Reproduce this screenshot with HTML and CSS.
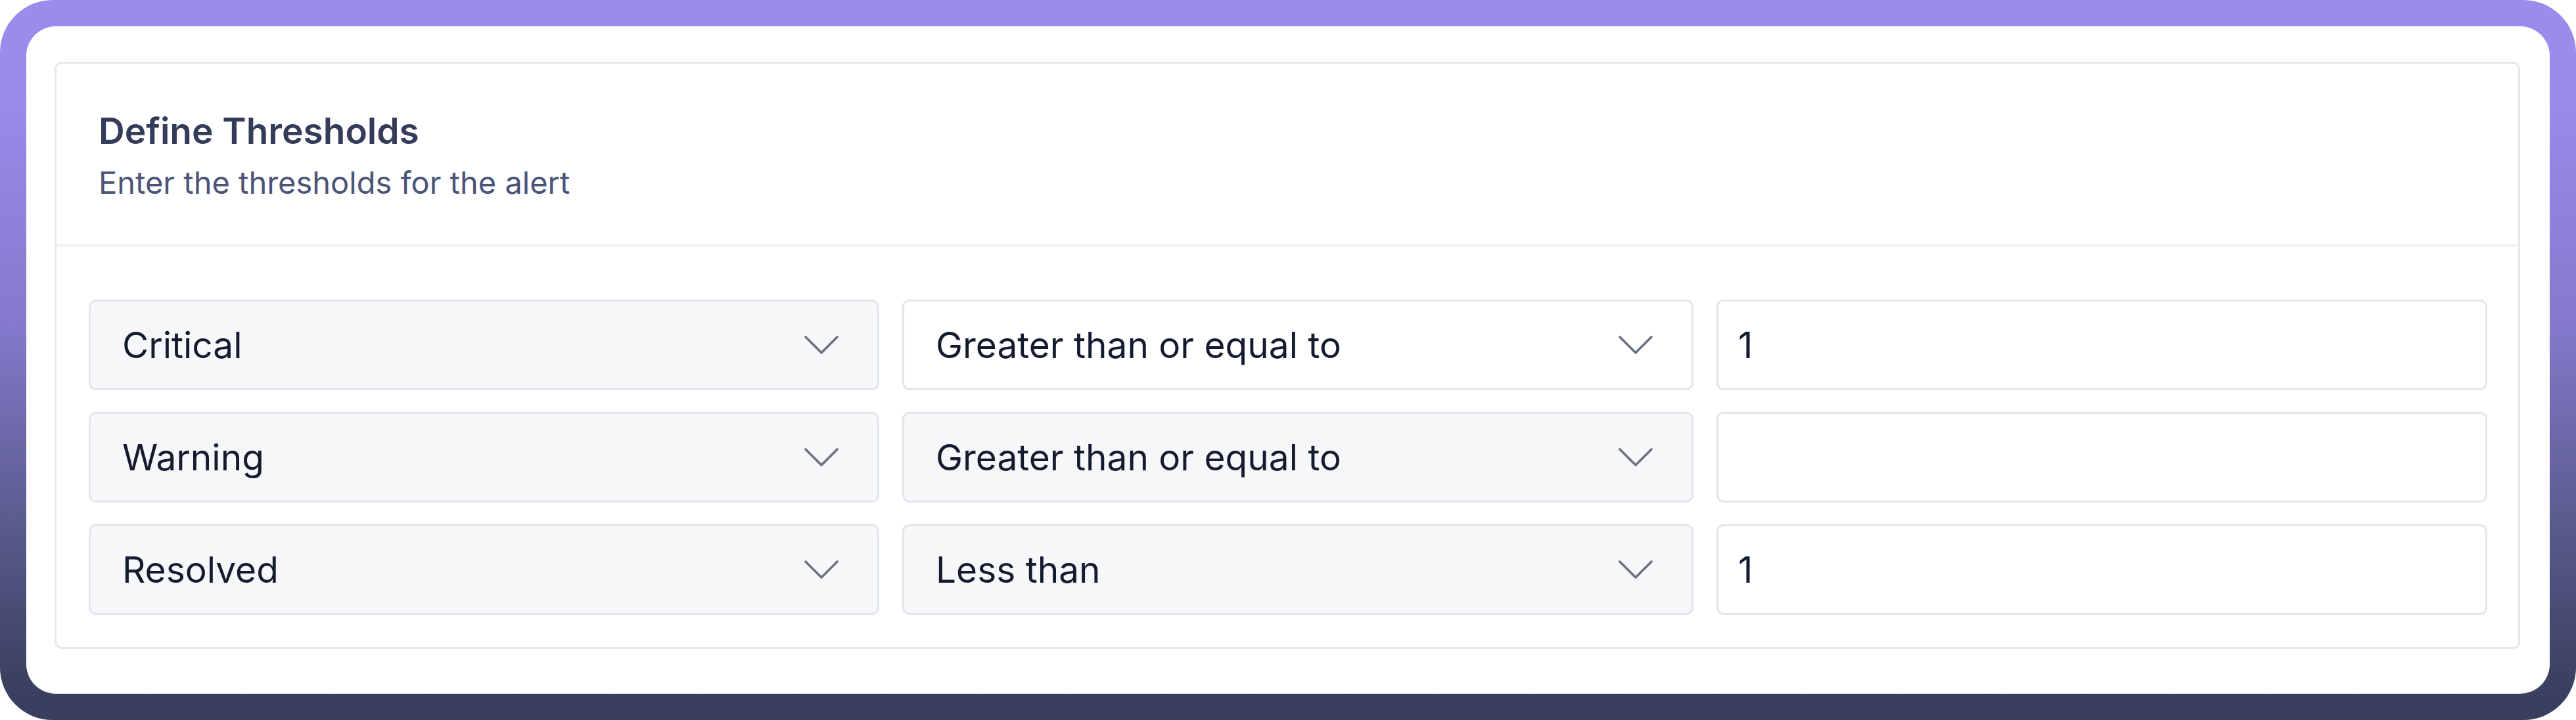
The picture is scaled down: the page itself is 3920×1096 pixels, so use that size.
FILE: index.html
```html
<!DOCTYPE html>
<html lang="en">
<head>
<meta charset="utf-8">
<title>Define Thresholds</title>
<link rel="stylesheet" href="styles.css">
</head>
<body>
<div class="frame">
  <div class="panel">
    <section class="card">
      <header class="card-header">
        <h2 class="title">Define Thresholds</h2>
        <p class="subtitle">Enter the thresholds for the alert</p>
      </header>
      <div class="card-body">
        <div class="grid">
          <div class="select"><span class="value">Critical</span><svg class="chev" width="54" height="30" viewBox="0 0 18 10"><path d="M1 1 L9 9 L17 1"/></svg></div>
          <div class="select select-white"><span class="value">Greater than or equal to</span><svg class="chev" width="54" height="30" viewBox="0 0 18 10"><path d="M1 1 L9 9 L17 1"/></svg></div>
          <div class="input"><span class="value">1</span></div>

          <div class="select"><span class="value">Warning</span><svg class="chev" width="54" height="30" viewBox="0 0 18 10"><path d="M1 1 L9 9 L17 1"/></svg></div>
          <div class="select"><span class="value">Greater than or equal to</span><svg class="chev" width="54" height="30" viewBox="0 0 18 10"><path d="M1 1 L9 9 L17 1"/></svg></div>
          <div class="input"><span class="value"></span></div>

          <div class="select"><span class="value">Resolved</span><svg class="chev" width="54" height="30" viewBox="0 0 18 10"><path d="M1 1 L9 9 L17 1"/></svg></div>
          <div class="select"><span class="value">Less than</span><svg class="chev" width="54" height="30" viewBox="0 0 18 10"><path d="M1 1 L9 9 L17 1"/></svg></div>
          <div class="input"><span class="value">1</span></div>
        </div>
      </div>
    </section>
  </div>
</div>
</body>
</html>
```

FILE: styles.css
```css
* {
  box-sizing: border-box;
}

html, body {
  margin: 0;
  padding: 0;
  background: #ffffff;
}

body {
  font-family: Inter, "Noto Sans", "Liberation Sans", sans-serif;
  -webkit-font-smoothing: antialiased;
}

.frame {
  width: 3920px;
  height: 1096px;
  border-radius: 80px;
  padding: 40px;
  background: linear-gradient(180deg, #9b8bec 0%, #9a8aea 14%, #8479cc 45%, #5b5c8f 72%, #3a405f 95%, #383e5c 100%);
  display: flex;
}

.panel {
  flex: 1;
  background: #ffffff;
  border-radius: 45px;
  padding: 54px 45px 0 43px;
}

.card {
  border: 3px solid #e4e7ee;
  border-radius: 11px;
  background: #ffffff;
}

.card-header {
  padding: 64px 64px 60px;
  border-bottom: 3px solid #eceef3;
}

.title {
  margin: 0;
  font-size: 55px;
  line-height: 77px;
  font-weight: 600;
  color: #343c59;
}

.subtitle {
  margin: 6px 0 0;
  font-size: 47px;
  line-height: 68px;
  font-weight: 400;
  color: #4b5476;
}

.card-body {
  padding: 81px 47px 49px 49px;
}

.grid {
  display: grid;
  grid-template-columns: 1203fr 1204fr 1173fr;
  column-gap: 35px;
  row-gap: 33px;
}

.select,
.input {
  height: 138px;
  border: 3px solid #e2e5eb;
  border-radius: 11px;
  display: flex;
  align-items: center;
  font-size: 55px;
  color: #141b2e;
}

.select {
  background: #f6f7f9;
  justify-content: space-between;
  padding: 0 58px 0 48px;
}

.select-white {
  background: #ffffff;
}

.input {
  background: #ffffff;
  padding: 0 30px;
}

.value {
  white-space: nowrap;
}

.chev {
  flex: none;
  fill: none;
  stroke: #6b7280;
  stroke-width: 1.2;
  stroke-linecap: round;
  stroke-linejoin: round;
}
```
